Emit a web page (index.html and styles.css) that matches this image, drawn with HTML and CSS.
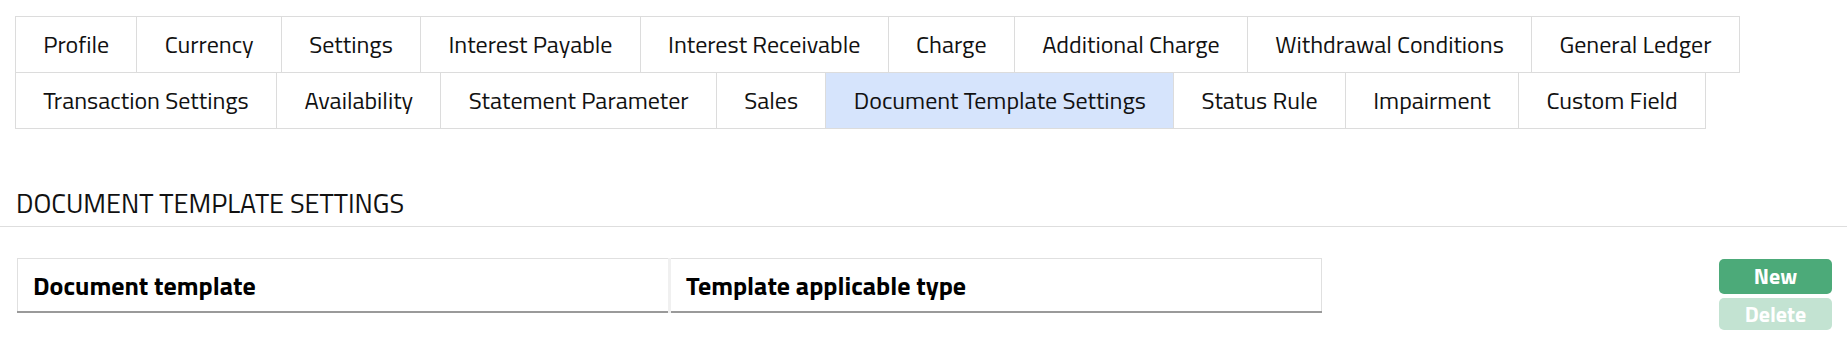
FILE: index.html
```html
<!DOCTYPE html>
<html>
<head>
  <meta charset="UTF-8" />
  <title>Product: Document Template Settings</title>
  <link rel="stylesheet" href="styles.css">
</head>
<body>
  <nav class="tabs">
    <ul class="tab-row">
      <li>Profile</li>
      <li>Currency</li>
      <li>Settings</li>
      <li>Interest Payable</li>
      <li>Interest Receivable</li>
      <li>Charge</li>
      <li>Additional Charge</li>
      <li>Withdrawal Conditions</li>
      <li>General Ledger</li>
    </ul>
    <ul class="tab-row">
      <li>Transaction Settings</li>
      <li>Availability</li>
      <li>Statement Parameter</li>
      <li>Sales</li>
      <li class="active">Document Template Settings</li>
      <li>Status Rule</li>
      <li>Impairment</li>
      <li>Custom Field</li>
    </ul>
  </nav>

  <section class="panel">
    <h2 class="panel-title">DOCUMENT TEMPLATE SETTINGS</h2>
    <div class="panel-body">
      <table class="grid">
        <thead>
          <tr>
            <th>Document template</th>
            <th>Template applicable type</th>
          </tr>
        </thead>
        <tbody></tbody>
      </table>
      <div class="actions">
        <button class="btn btn-new">New</button>
        <button class="btn btn-delete" disabled>Delete</button>
      </div>
    </div>
  </section>
</body>
</html>
```

FILE: styles.css
```css
body {
  margin: 0;
  font-family: "Titillium Web", Roboto, "Liberation Sans", sans-serif;
  color: #111;
  background: #fff;
}

/* tab strip */
.tabs {
  padding: 16px 0 0 15px;
}
.tab-row {
  display: flex;
  margin: 0;
  padding: 0;
  list-style: none;
}
.tab-row + .tab-row {
  margin-top: -1px;
}
.tab-row > li {
  height: 55px;
  line-height: 55px;
  padding: 0 27.3px;
  font-size: 24px;
  white-space: nowrap;
  border: 1px solid #dcdcdc;
  background: #fff;
  cursor: pointer;
}
.tab-row > li + li {
  margin-left: -1px;
}
.tab-row > li.active {
  background: #d6e4fc;
}

/* section */
.panel-title {
  margin: 59px 0 0;
  padding: 0 16px 8px;
  font-size: 27px;
  font-weight: 400;
  line-height: 30px;
  color: #111;
  border-bottom: 1px solid #dedede;
}
.panel-body {
  display: flex;
  align-items: flex-start;
  margin-top: 31px;
  padding: 0 15px 0 17px;
}

.grid {
  width: 1305px;
  border-collapse: collapse;
  border-top: 1px solid #e0e0e0;
  border-left: 1px solid #e0e0e0;
  border-right: 1px solid #e0e0e0;
  border-bottom: 2px solid #9a9a9a;
}
.grid th {
  width: 50%;
  height: 52px;
  padding: 0 15px;
  text-align: left;
  font-size: 26px;
  font-weight: 700;
  color: #000;
}
.grid th + th {
  border-left: 3px solid #f0f0f0;
}

.actions {
  display: flex;
  flex-direction: column;
  gap: 4px;
  margin-left: auto;
  margin-top: 1px;
}
.btn {
  width: 113px;
  padding: 0;
  border: 0;
  border-radius: 5px;
  font-family: inherit;
  font-size: 22px;
  font-weight: 700;
  color: #fff;
  cursor: pointer;
}
.btn-new {
  height: 35px;
  line-height: 35px;
  background: #4caa79;
}
.btn-delete {
  height: 32px;
  line-height: 32px;
  background: #c3e3d2;
  cursor: default;
}
```
